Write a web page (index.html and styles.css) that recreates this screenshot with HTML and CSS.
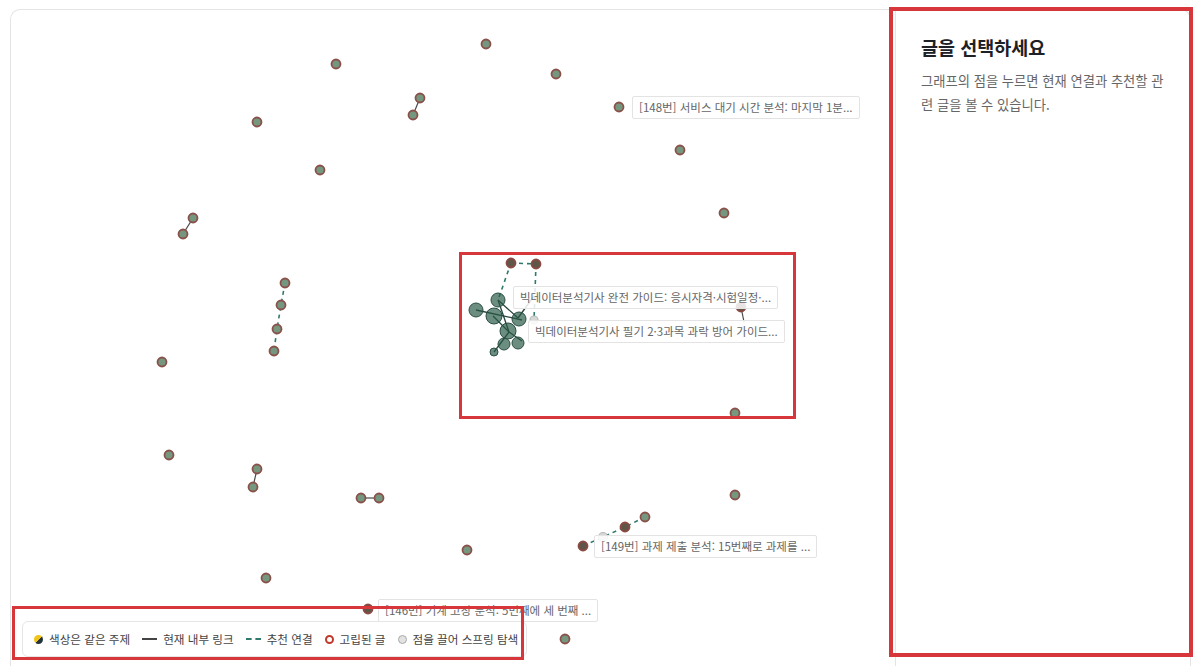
FILE: index.html
```html
<!DOCTYPE html>
<html lang="ko">
<head>
    <meta charset="UTF-8">
    <title>글 연결 그래프</title>
    <link rel="stylesheet" href="styles.css">
</head>
<body>
    <div class="app">
        <div class="graph">
            <svg class="graph-canvas" viewBox="11 10 886 698" width="886" height="698">
                <!-- internal links -->
                <g class="link">
                    <line x1="420" y1="98" x2="413" y2="115"/>
                    <line x1="193" y1="218" x2="183" y2="234"/>
                    <line x1="257" y1="469" x2="253" y2="487"/>
                    <line x1="361" y1="498" x2="379" y2="498"/>
                    <line x1="741" y1="307" x2="744" y2="322"/>
                </g>
                <!-- recommended links -->
                <g class="rec">
                    <polyline points="285,283 281,305 277,329 274,351"/>
                    <line x1="511" y1="263" x2="536" y2="264"/>
                    <line x1="511" y1="263" x2="498" y2="300"/>
                    <line x1="536" y1="264" x2="534" y2="320"/>
                    <polyline points="645,517 625,527 603,537 583,546"/>
                </g>
                <!-- cluster -->
                <g class="cluster-link">
                    <line x1="476" y1="310" x2="522" y2="320"/>
                    <line x1="498" y1="300" x2="509" y2="332"/>
                    <line x1="509" y1="332" x2="494" y2="352"/>
                    <line x1="509" y1="332" x2="522" y2="341"/>
                    <line x1="498" y1="300" x2="518" y2="318"/>
                    <line x1="493" y1="316" x2="509" y2="332"/>
                    <line x1="518" y1="318" x2="534" y2="296"/>
                </g>
                <g class="cluster">
                    <circle cx="498" cy="300" r="7"/>
                    <circle cx="476" cy="310" r="7"/>
                    <circle cx="494" cy="316" r="8"/>
                    <circle cx="519" cy="319" r="7"/>
                    <circle cx="508" cy="331" r="8"/>
                    <circle cx="504" cy="344" r="6"/>
                    <circle cx="518" cy="343" r="6"/>
                    <circle cx="494" cy="352" r="4"/>
                </g>
                <g class="node">
                    <circle cx="486" cy="44" r="4.5"/>
                    <circle cx="336" cy="64" r="4.5"/>
                    <circle cx="556" cy="74" r="4.5"/>
                    <circle cx="420" cy="98" r="4.5"/>
                    <circle cx="413" cy="115" r="4.5"/>
                    <circle cx="619" cy="107" r="4.5"/>
                    <circle cx="257" cy="122" r="4.5"/>
                    <circle cx="680" cy="150" r="4.5"/>
                    <circle cx="320" cy="170" r="4.5"/>
                    <circle cx="724" cy="213" r="4.5"/>
                    <circle cx="193" cy="218" r="4.5"/>
                    <circle cx="183" cy="234" r="4.5"/>
                    <circle cx="285" cy="283" r="4.5"/>
                    <circle cx="281" cy="305" r="4.5"/>
                    <circle cx="277" cy="329" r="4.5"/>
                    <circle cx="274" cy="351" r="4.5"/>
                    <circle cx="162" cy="362" r="4.5"/>
                    <circle cx="169" cy="455" r="4.5"/>
                    <circle cx="257" cy="469" r="4.5"/>
                    <circle cx="253" cy="487" r="4.5"/>
                    <circle cx="361" cy="498" r="4.5"/>
                    <circle cx="379" cy="498" r="4.5"/>
                    <circle cx="735" cy="495" r="4.5"/>
                    <circle cx="645" cy="517" r="4.5"/>
                    <circle cx="467" cy="550" r="4.5"/>
                    <circle cx="266" cy="578" r="4.5"/>
                    <circle cx="565" cy="639" r="4.5"/>
                    <circle cx="735" cy="413" r="4.5"/>
                </g>
                <g class="node dark">
                    <circle cx="583" cy="546" r="4.5"/>
                    <circle cx="625" cy="527" r="4.5"/>
                    <circle cx="368" cy="609" r="4.5"/>
                    <circle cx="511" cy="263" r="4.5"/>
                    <circle cx="536" cy="264" r="4.5"/>
                    <circle cx="741" cy="307" r="4.5"/>
                </g>
                <g class="node pale">
                    <circle cx="603" cy="537" r="4.5"/>
                    <circle cx="534" cy="320" r="4"/>
                </g>
            </svg>

            <div class="node-label" style="left: 621px; top: 86px;">[148번] 서비스 대기 시간 분석: 마지막 1분...</div>
            <div class="node-label" style="left: 502px; top: 276px;">빅데이터분석기사 완전 가이드: 응시자격·시험일정·...</div>
            <div class="node-label" style="left: 517px; top: 310px;">빅데이터분석기사 필기 2·3과목 과락 방어 가이드...</div>
            <div class="node-label" style="left: 583px; top: 525px;">[149번] 과제 제출 분석: 15번째로 과제를 ...</div>
            <div class="node-label" style="left: 367px; top: 589px;">[146번] 기계 고장 분석: 5번째에 세 번째 ...</div>

            <div class="legend">
                <span class="legend-item"><i class="sw-topic"></i>색상은 같은 주제</span>
                <span class="legend-item"><i class="sw-line"></i>현재 내부 링크</span>
                <span class="legend-item"><i class="sw-dash"></i>추천 연결</span>
                <span class="legend-item"><i class="sw-ring"></i>고립된 글</span>
                <span class="legend-item"><i class="sw-drag"></i>점을 끌어 스프링 탐색</span>
            </div>
        </div>

        <aside class="sidebar">
            <h2>글을 선택하세요</h2>
            <p>그래프의 점을 누르면 현재 연결과 추천할 관련 글을 볼 수 있습니다.</p>
        </aside>
    </div>

    <!-- review marks -->
    <div class="mark mark-side"></div>
    <div class="mark mark-cluster"></div>
    <div class="mark mark-legend"></div>
</body>
</html>
```

FILE: styles.css
```css
html, body {
    margin: 0;
    height: 100%;
    background: #fff;
    font-family: "Noto Sans CJK KR", "Noto Sans", sans-serif;
    overflow: hidden;
}
.app {
    display: flex;
    margin: 9px 9px 0 10px;
    height: calc(100vh - 9px);
    box-sizing: border-box;
    border: 1px solid #e4e4e4;
    border-bottom: 0;
    border-radius: 10px 10px 0 0;
    overflow: hidden;
}
.graph {
    flex: 1;
    position: relative;
    overflow: hidden;
}
.graph-canvas {
    position: absolute;
    left: 0;
    top: 0;
}
.link line {
    stroke: #4a4a4a;
    stroke-width: 1.2;
}
.rec line, .rec polyline {
    stroke: #2f7a6c;
    stroke-width: 1.6;
    stroke-dasharray: 4 4;
    fill: none;
}
.cluster-link line {
    stroke: #25443b;
    stroke-width: 1.3;
}
.cluster circle {
    fill: rgba(38, 88, 70, 0.68);
    stroke: #2b4f44;
    stroke-width: 1;
}
.node circle {
    fill: #76977f;
    stroke: #8a514a;
    stroke-width: 1.8;
}
.node.dark circle {
    fill: #5f5549;
    stroke: #8c4a43;
}
.node.pale circle {
    fill: #d6d8d6;
    stroke: #b9bbb9;
    stroke-width: 1.2;
}
.node-label {
    position: absolute;
    padding: 3px 6px;
    font-size: 11.5px;
    line-height: 15px;
    color: #666;
    background: rgba(255, 255, 255, 0.85);
    border: 1px solid #e3e3e3;
    border-radius: 2px;
    white-space: nowrap;
}
.legend {
    position: absolute;
    left: 11px;
    top: 611px;
    display: flex;
    align-items: center;
    gap: 12px;
    padding: 9px 8px 9px 11px;
    font-size: 11.6px;
    color: #444;
    background: #fff;
    border: 1px solid #e6e6e6;
    border-radius: 6px;
}
.legend-item {
    display: flex;
    align-items: center;
    gap: 6px;
}
.legend-item i {
    display: inline-block;
}
.sw-topic {
    width: 9px;
    height: 9px;
    border-radius: 50%;
    background: linear-gradient(135deg, #f0c419 50%, #24343a 50%);
}
.sw-line {
    width: 15px;
    border-top: 2px solid #444;
}
.sw-dash {
    width: 15px;
    border-top: 2px dashed #2f7a6c;
}
.sw-ring {
    width: 5px;
    height: 5px;
    border-radius: 50%;
    border: 2px solid #c0392b;
}
.sw-drag {
    width: 7px;
    height: 7px;
    border-radius: 50%;
    background: #e2e2e2;
    border: 1px solid #aaa;
}
.sidebar {
    width: 244px;
    flex-shrink: 0;
    padding: 24px 25px;
    border-left: 1px solid #e4e4e4;
}
.sidebar h2 {
    margin: 0 0 9px;
    font-size: 18.5px;
    font-weight: 700;
    color: #1d2125;
    line-height: 26px;
}
.sidebar p {
    margin: 0;
    font-size: 13.3px;
    line-height: 24px;
    color: #666;
    word-break: break-all;
}
.mark {
    position: absolute;
    border: 3px solid #d7373a;
    pointer-events: none;
}
.mark-side {
    left: 889px;
    top: 7px;
    width: 296px;
    height: 642px;
    border-width: 4px;
}
.mark-cluster {
    left: 459px;
    top: 252px;
    width: 331px;
    height: 161px;
}
.mark-legend {
    left: 12px;
    top: 606px;
    width: 506px;
    height: 48px;
}
```
